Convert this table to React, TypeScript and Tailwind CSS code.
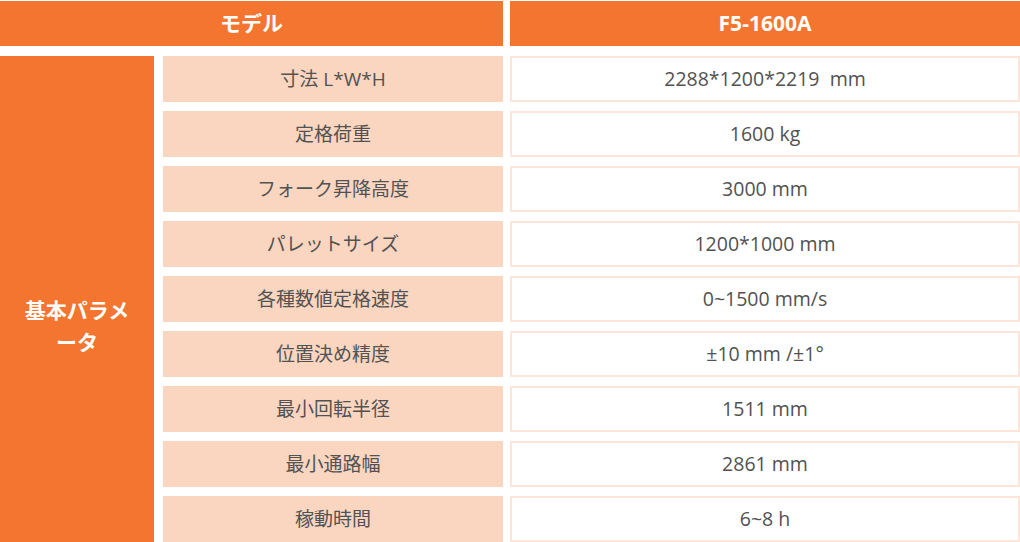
const rows = [
  ["寸法 L*W*H", "2288*1200*2219  mm"],
  ["定格荷重", "1600 kg"],
  ["フォーク昇降高度", "3000 mm"],
  ["パレットサイズ", "1200*1000 mm"],
  ["各種数値定格速度", "0~1500 mm/s"],
  ["位置決め精度", "±10 mm /±1°"],
  ["最小回転半径", "1511 mm"],
  ["最小通路幅", "2861 mm"],
  ["稼動時間", "6~8 h"],
];

export default function App() {
  return (
    <div className="w-[1020px] h-[542px] bg-white pt-px font-['Open_Sans','Noto_Sans_CJK_JP',sans-serif] overflow-hidden">
      {/* Header */}
      <div className="flex gap-[7px] h-[45px]">
        <div className="w-[503px] bg-[#f47530] flex items-center justify-center text-white font-bold text-[21px]">
          モデル
        </div>
        <div className="flex-1 bg-[#f47530] flex items-center justify-center text-white font-bold text-[21px]">
          F5-1600A
        </div>
      </div>

      {/* Body */}
      <div className="mt-[10px] flex gap-[9px]">
        <div className="w-[154px] bg-[#f47530] flex items-center justify-center px-5 pt-[54px] text-center text-white font-bold text-[21px] leading-[32px]">
          基本パラメータ
        </div>
        <div className="flex-1 flex flex-col gap-[9px]">
          {rows.map(([label, value]) => (
            <div key={label} className="flex gap-[7px] h-[46px]">
              <div className="w-[340px] bg-[#fad5c0] flex items-center justify-center text-[19px] text-[#525252]">
                {label}
              </div>
              <div className="flex-1 border-2 border-[#fde5d9] flex items-center justify-center whitespace-pre text-[19.5px] text-[#525252]">
                {value}
              </div>
            </div>
          ))}
        </div>
      </div>
    </div>
  );
}
